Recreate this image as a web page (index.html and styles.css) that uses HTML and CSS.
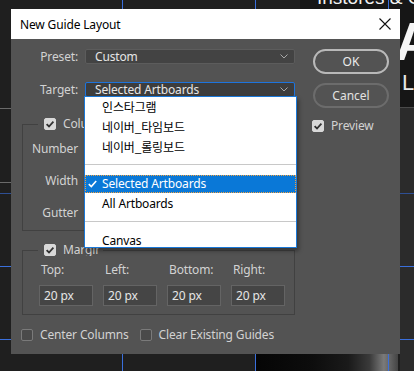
FILE: index.html
```html
<!DOCTYPE html>
<html lang="ko">
<head>
  <meta charset="UTF-8" />
  <title>New Guide Layout</title>
  <link rel="stylesheet" href="styles.css">
</head>
<body>
  <div class="scene">
    <!-- 캔버스 배경 -->
    <div class="backdrop">
      <div class="strip-top"></div>
      <div class="strip-right"></div>
      <div class="photo"></div>
      <span class="bg-title">Instores &amp; O</span>
      <span class="bg-big-a">A</span>
      <span class="bg-big-l">L</span>
      <div class="rule rule-a"></div>
      <div class="rule rule-b"></div>
      <div class="rule rule-c"></div>
      <div class="guide-h gh-1"></div>
      <div class="guide-h gh-2"></div>
      <div class="guide-h gh-3"></div>
      <div class="guide-v gv-1"></div>
      <div class="guide-v gv-2"></div>
      <div class="guide-v gv-3"></div>
    </div>

    <!-- 대화상자 -->
    <div class="dialog">
      <div class="titlebar">
        <span class="title">New Guide Layout</span>
        <svg class="close" width="12" height="12" viewBox="0 0 12 12">
          <path d="M0.5 0.5 L11.5 11.5 M11.5 0.5 L0.5 11.5" stroke="#111" stroke-width="1.1" fill="none"/>
        </svg>
      </div>

      <div class="dialog-body">
        <div class="form">
          <div class="field-row">
            <label class="field-label">Preset:</label>
            <div class="select">
              <span>Custom</span>
              <svg class="chev" width="8" height="5" viewBox="0 0 8 5"><path d="M0.5 0.5 L4 4 L7.5 0.5" stroke="#a8a8a8" fill="none"/></svg>
            </div>
          </div>
          <div class="field-row row-target">
            <label class="field-label">Target:</label>
            <div class="select select-focus">
              <span>Selected Artboards</span>
              <svg class="chev" width="8" height="5" viewBox="0 0 8 5"><path d="M0.5 0.5 L4 4 L7.5 0.5" stroke="#a8a8a8" fill="none"/></svg>
            </div>
          </div>

          <fieldset class="group group-columns">
            <legend class="legend"><span class="check on"></span><span>Columns</span></legend>
            <div class="col-rows">
              <div class="col-row"><span class="col-label">Number</span><span class="input"></span></div>
              <div class="col-row"><span class="col-label">Width</span><span class="input"></span></div>
              <div class="col-row"><span class="col-label">Gutter</span><span class="input"></span></div>
            </div>
          </fieldset>

          <fieldset class="group group-margin">
            <legend class="legend"><span class="check on"></span><span class="legend-text">Margin</span></legend>
            <div class="margin-grid">
              <span class="m-label">Top:</span>
              <span class="m-label">Left:</span>
              <span class="m-label">Bottom:</span>
              <span class="m-label">Right:</span>
              <span class="input">20 px</span>
              <span class="input">20 px</span>
              <span class="input">20 px</span>
              <span class="input">20 px</span>
            </div>
          </fieldset>

          <div class="bottom-checks">
            <span class="check-item"><span class="check"></span>Center Columns</span>
            <span class="check-item"><span class="check"></span>Clear Existing Guides</span>
          </div>
        </div>

        <div class="actions">
          <button class="btn btn-primary">OK</button>
          <button class="btn">Cancel</button>
          <span class="check-item preview"><span class="check on"></span>Preview</span>
        </div>
      </div>

      <!-- 열린 드롭다운 목록 -->
      <ul class="dropdown">
        <li class="opt ko">인스타그램</li>
        <li class="opt ko">네이버_타임보드</li>
        <li class="opt ko">네이버_롤링보드</li>
        <li class="sep"></li>
        <li class="opt opt-selected">
          <svg class="tick" width="9" height="8" viewBox="0 0 9 8"><path d="M0.8 4.2 L3.3 6.6 L8.2 0.9" stroke="#fff" stroke-width="1.6" fill="none"/></svg>
          Selected Artboards
        </li>
        <li class="opt">All Artboards</li>
        <li class="sep"></li>
        <li class="opt opt-last">Canvas</li>
      </ul>
    </div>
  </div>
</body>
</html>
```

FILE: styles.css
```css
/* --- 기본 --- */
*, *::before, *::after { box-sizing: border-box; margin: 0; padding: 0; }
body {
  width: 414px; height: 371px; overflow: hidden;
  background: #1f1f1f;
  font-family: "Noto Sans", "Noto Sans CJK KR", sans-serif;
  font-size: 12px; color: #d2d2d2; letter-spacing: -0.15px;
}
.scene { position: relative; width: 414px; height: 371px; overflow: hidden; }

/* --- 캔버스 배경 --- */
.backdrop { position: absolute; inset: 0; }
.strip-top { position: absolute; left: 300px; top: 0; width: 114px; height: 107px; background: #161616; }
.strip-right { position: absolute; left: 400px; top: 107px; width: 14px; bottom: 0; background: #2b2b2b; }
.photo {
  position: absolute; left: 256px; top: 354px; width: 142px; height: 17px;
  background: linear-gradient(90deg, #050505 0%, #0d0d0d 40%, #1a1a1a 65%, #3a3a3a 80%, #7a7a7a 90%, #444 100%);
}
.bg-title {
  position: absolute; left: 317px; top: -13px; letter-spacing: 0;
  font-family: "Liberation Sans", sans-serif; font-size: 19px; color: #f2f2f2; white-space: nowrap;
}
.bg-big-a {
  position: absolute; left: 395px; top: 14px; line-height: 1;
  font-family: "Liberation Sans", sans-serif; font-weight: 700; font-size: 54px; color: #f5f5f5;
}
.bg-big-l {
  position: absolute; left: 402px; top: 72px; line-height: 1;
  font-family: "Liberation Sans", sans-serif; font-size: 22px; color: #e8e8e8;
}
.rule { position: absolute; height: 1px; background: #6a6a6a; }
.rule-a { left: 0; top: 108px; width: 11px; }
.rule-b { left: 0; top: 182px; width: 11px; }
.rule-c { left: 400px; top: 107px; width: 14px; background: #4a4a4a; }
.guide-h { position: absolute; left: 0; right: 0; height: 1px; background: #3a6fdc; }
.gh-1 { top: 193px; background: #2e4f94; }
.gh-2 { top: 266px; }
.gh-3 { top: 339px; }
.guide-v { position: absolute; top: 0; bottom: 0; width: 1px; background: #3a6fdc; }
.gv-1 { left: 122px; }
.gv-2 { left: 255px; }
.gv-3 { left: 388px; }

/* --- 대화상자 --- */
.dialog {
  position: absolute; left: 11px; top: 9px; width: 389px; height: 345px;
  background: #535353; display: flex; flex-direction: column;
}
.titlebar {
  height: 30px; background: #fff; color: #000;
  display: flex; align-items: center; justify-content: space-between;
  padding: 0 9px 0 9px;
}
.title { font-size: 12px; }
.dialog-body { display: flex; padding: 10px 11px 0 0; }
.form { width: 284px; }

.field-row { display: flex; align-items: center; gap: 7px; height: 15px; }
.row-target { margin-top: 18px; }
.field-label { width: 67px; text-align: right; }
.select {
  width: 210px; height: 15px; background: #434343; border: 1px solid #5c5c5c; border-radius: 2px;
  display: flex; align-items: center; justify-content: space-between;
  padding: 0 6px 0 9px; color: #e6e6e6; line-height: 13px;
}
.select-focus { border-color: #1d74dd; background: #3d3d3d; }

/* --- 그룹 상자 --- */
.group { border: 1px solid #414141; margin-left: 11px; width: 273px; padding: 0; }
.group-columns { margin-top: 21px; }
.group-margin { margin-top: 13px; }
.legend {
  margin-left: 15px; padding: 0 4px 0 6px;
  display: flex; align-items: center; gap: 7px; height: 12px; line-height: 12px;
}
.legend-text { display: block; width: 36px; overflow: hidden; white-space: nowrap; }
.check {
  width: 12px; height: 12px; border-radius: 2px; flex: none;
  border: 1px solid #7a7a7a; background: #4a4a4a; display: inline-block;
}
.check.on {
  border-color: #d8d8d8;
  background: #d8d8d8 url("data:image/svg+xml,%3Csvg xmlns='http://www.w3.org/2000/svg' width='12' height='12'%3E%3Cpath d='M2.6 6.2 L5 8.5 L9.4 3.6' stroke='%23333' stroke-width='1.8' fill='none'/%3E%3C/svg%3E") center/12px 12px no-repeat;
}

.col-rows { display: flex; flex-direction: column; gap: 11px; padding: 8px 0 7px; }
.col-row { display: flex; align-items: center; gap: 6px; height: 21px; }
.col-label { width: 55px; text-align: right; }

.input {
  height: 21px; width: 54px; background: #454545; border: 1px solid #646464;
  padding-left: 4px; line-height: 19px; color: #e6e6e6;
}

.margin-grid {
  display: grid; grid-template-columns: repeat(4, 54px); column-gap: 10px; row-gap: 8px;
  padding: 7px 0 8px 16px;
}
.m-label { padding-left: 2px; line-height: 14px; height: 14px; }

.bottom-checks { display: flex; gap: 11px; margin: 14px 0 0 10px; }
.check-item { display: flex; align-items: center; gap: 7px; line-height: 12px; }

/* --- 오른쪽 버튼 --- */
.actions { margin-left: 18px; width: 76px; display: flex; flex-direction: column; }
.btn {
  height: 25px; border-radius: 13px; background: transparent;
  border: 2px solid #b9b9b9; color: #ececec;
  font-family: "Noto Sans", sans-serif; font-size: 12px;
}
.btn + .btn { margin-top: 9px; border-color: #6c6c6c; color: #e2e2e2; }
.preview { margin: 12px 0 0 -1px; }

/* --- 드롭다운 --- */
.dropdown {
  position: absolute; left: 73px; top: 87px; width: 213px; height: 152px;
  background: #fff; border: 1px solid #1a78d8; list-style: none; overflow: hidden;
  box-shadow: 2px 3px 4px rgba(0, 0, 0, 0.35); color: #000;
}
.opt { height: 20px; line-height: 20px; padding-left: 17px; white-space: nowrap; }
.ko { font-family: "Noto Sans CJK KR", sans-serif; }
.sep {
  height: 17px;
  background: linear-gradient(#c8c8c8, #c8c8c8) 0 7px / 100% 1px no-repeat;
}
.opt-selected {
  position: relative; height: 18px; line-height: 16px; margin: 1px 0;
  background: #0a78d7; color: #fff; border: 1px dotted #f4a340;
  padding-left: 16px;
}
.tick { position: absolute; left: 2px; top: 4px; }
.opt-last { height: 18px; line-height: 19px; }
```
